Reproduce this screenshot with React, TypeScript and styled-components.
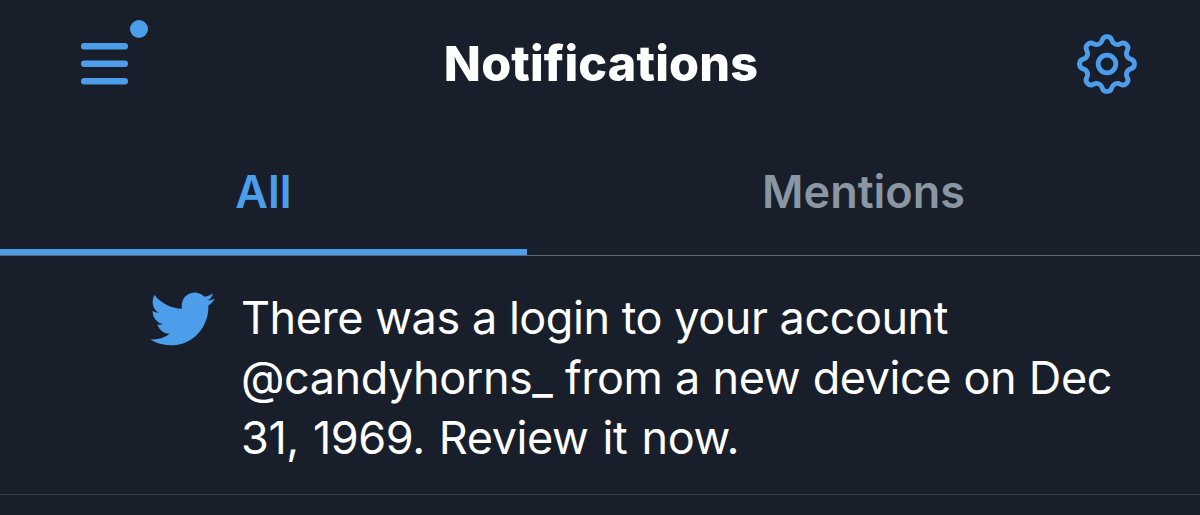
import React from 'react';
import styled, { createGlobalStyle } from 'styled-components';

const GlobalStyle = createGlobalStyle`
  * {
    box-sizing: border-box;
  }

  body {
    margin: 0;
    background-color: #181f2a;
    font-family: Inter, "Liberation Sans", sans-serif;
  }
`;

const Screen = styled.main`
  display: flex;
  flex-direction: column;
  height: 515px;
  overflow: hidden;
`;

const Header = styled.header`
  display: grid;
  grid-template-columns: 1fr auto 1fr;
  align-items: center;
  height: 128px;
  padding: 0 61px 0 78px;
`;

const MenuButton = styled.button`
  display: flex;
  justify-self: start;
  padding: 0;
  border: 0;
  background: none;
`;

const SettingsButton = styled(MenuButton)`
  justify-self: end;
`;

const Title = styled.h1`
  margin: 0 0 0 -15px;
  font-size: 48.5px;
  font-weight: 800;
  line-height: 60px;
  letter-spacing: 0.15px;
  color: #ffffff;
`;

const Tabs = styled.nav`
  display: flex;
  height: 128px;
  border-bottom: 1px solid #5f6875;
`;

const Tab = styled.button<{ $active?: boolean }>`
  flex: ${props => (props.$active ? '0 0 527px' : '1')};
  height: 127px;
  padding: 5px 0 0;
  border: 0;
  border-bottom: 6px solid ${props => (props.$active ? '#4c9eeb' : 'transparent')};
  background: none;
  font-family: inherit;
  font-size: 45px;
  font-weight: 600;
  color: ${props => (props.$active ? '#4c9eeb' : '#8a96a3')};
`;

const Notification = styled.article`
  display: flex;
  align-items: flex-start;
  gap: 26px;
  height: 239px;
  padding: 32px 60px 0 150px;
  border-bottom: 1px solid #363e49;
`;

const BirdIcon = styled.svg`
  flex: none;
  width: 65px;
  height: 65px;
`;

const Message = styled.p`
  margin: 0;
  font-size: 45px;
  line-height: 60px;
  color: #ffffff;
  white-space: nowrap;
`;

const Line = styled.span<{ $letter: number; $word: number }>`
  display: block;
  letter-spacing: ${props => props.$letter}px;
  word-spacing: ${props => props.$word}px;
`;

// Eight rounded teeth, each joined to the next by a concave arc.
const gearPath = () => {
  const point = (degrees: number) => {
    const angle = (degrees * Math.PI) / 180;
    return `${(32 + 24.25 * Math.cos(angle)).toFixed(2)} ${(32 + 24.25 * Math.sin(angle)).toFixed(2)}`;
  };
  let d = `M${point(-11.5)}`;
  for (let tooth = 0; tooth < 8; tooth++) {
    d += `A5 5 0 0 1 ${point(tooth * 45 + 11.5)}`;
    d += `A5.8 5.8 0 0 0 ${point(tooth * 45 + 33.5)}`;
  }
  return `${d}Z`;
};

const App = () => {
  const lines = [
    { text: "There was a login to your account", letter: -0.46, word: 0 },
    { text: "@candyhorns_ from a new device on Dec", letter: -0.45, word: 0.4 },
    { text: "31, 1969. Review it now.", letter: -0.4, word: 1.8 }
  ];

  return (
    <>
      <GlobalStyle />
      <Screen>
        <Header>
          <MenuButton aria-label="Menu">
            <svg width="72" height="92" viewBox="0 0 72 92" fill="#4c9eeb">
              <circle cx="61" cy="11" r="9" />
              <rect x="3" y="25" width="47" height="6.4" rx="3.2" />
              <rect x="3" y="42.5" width="47" height="6.4" rx="3.2" />
              <rect x="3" y="60" width="47" height="6.4" rx="3.2" />
            </svg>
          </MenuButton>
          <Title>Notifications</Title>
          <SettingsButton aria-label="Settings">
            <svg width="64" height="64" viewBox="0 0 64 64" fill="none" stroke="#4c9eeb" strokeWidth="4.8">
              <path d={gearPath()} strokeLinejoin="round" />
              <circle cx="32" cy="32" r="8.8" />
            </svg>
          </SettingsButton>
        </Header>

        <Tabs>
          <Tab $active>All</Tab>
          <Tab>Mentions</Tab>
        </Tabs>

        <Notification>
          <BirdIcon viewBox="0 0.6 24 24" fill="#4c9eeb">
            <path d="M23.953 4.57a10 10 0 01-2.825.775 4.958 4.958 0 002.163-2.723c-.951.555-2.005.959-3.127 1.184a4.92 4.92 0 00-8.384 4.482C7.69 8.095 4.067 6.13 1.64 3.162a4.822 4.822 0 00-.666 2.475c0 1.71.87 3.213 2.188 4.096a4.904 4.904 0 01-2.228-.616v.06a4.923 4.923 0 003.946 4.827 4.996 4.996 0 01-2.212.085 4.936 4.936 0 004.604 3.417 9.867 9.867 0 01-6.102 2.105c-.39 0-.779-.023-1.17-.067a13.995 13.995 0 007.557 2.209c9.053 0 13.998-7.496 13.998-13.985 0-.21 0-.42-.015-.63A9.935 9.935 0 0024 4.59z" />
          </BirdIcon>
          <Message>
            {lines.map((line, index) => (
              <Line key={index} $letter={line.letter} $word={line.word}>{line.text}</Line>
            ))}
          </Message>
        </Notification>
      </Screen>
    </>
  );
};

export default App;
